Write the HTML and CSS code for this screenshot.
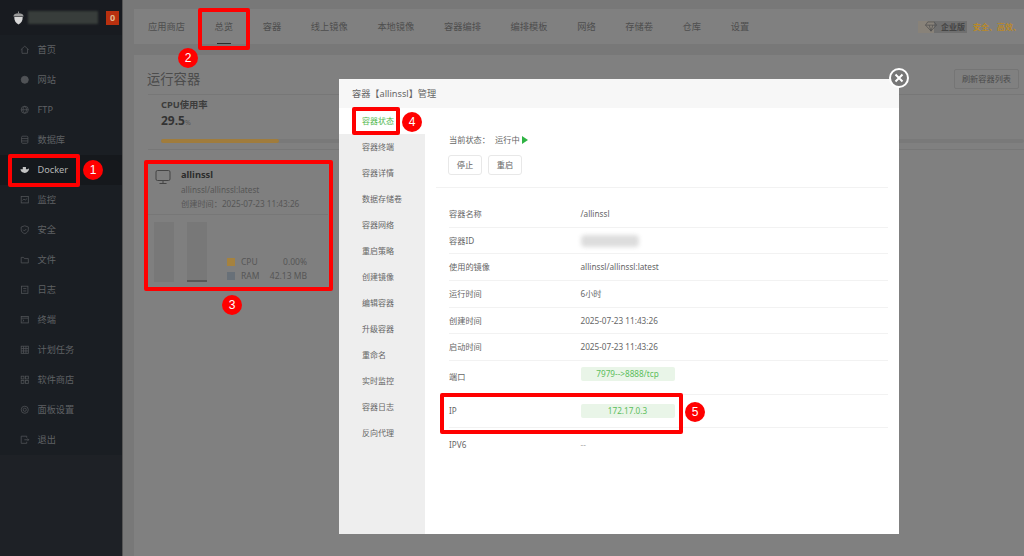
FILE: index.html
```html
<!DOCTYPE html>
<html lang="zh">
<head>
<meta charset="utf-8">
<title>Docker</title>
<link rel="stylesheet" href="styles.css">
</head>
<body>
<div class="app">
  <aside class="side">
    <div class="brand">
      <svg class="acorn" viewBox="0 0 14 14"><path d="M1.500 5.500C1.500 3 4 2 7 2s5.500 1 5.500 3.500z" fill="#9a9a9a"/><path d="M6.500 0h1v2h-1z" fill="#9a9a9a"/><path d="M2.500 6h9c.3 4-1.800 6.700-4.500 8C4.300 12.700 2.200 10 2.500 6z" fill="#d8d8d8"/></svg>
      <span class="brand-name"></span>
      <span class="brand-badge">0</span>
    </div>
    <nav class="menu">
      <a class="item"><svg class="ico" viewBox="0 0 12 12"><path d="M1 6l5-4.500L11 6M2.500 5v5.500h7V5"/></svg>首页</a>
      <a class="item"><svg class="ico" viewBox="0 0 12 12"><circle class="solid-dim" cx="6" cy="6" r="4.500"/><path d="M1.500 6h9M6 1.500v9"/></svg>网站</a>
      <a class="item"><svg class="ico" viewBox="0 0 12 12"><circle cx="6" cy="6" r="4.500"/><path d="M1.500 6h9M6 1.500c-3 3-3 6 0 9M6 1.500c3 3 3 6 0 9"/></svg>FTP</a>
      <a class="item"><svg class="ico" viewBox="0 0 12 12"><rect x="2" y="1.500" width="8" height="9" rx="1.500"/><path d="M2 4.500h8M2 7.500h8"/></svg>数据库</a>
      <a class="item active"><svg class="ico" viewBox="0 0 12 12"><path class="solid" d="M.5 5.500h9c.5-.8 1.200-1 2-1-.2 3-2.200 5.500-5.500 5.500C3 10 1 8.500.5 5.500zM3.500 2.500h4v3h-4z"/></svg>Docker</a>
      <a class="item"><svg class="ico" viewBox="0 0 12 12"><rect x="1.500" y="2" width="9" height="8"/><path d="M3 7l2-2 1.500 1.500L9 4.500"/></svg>监控</a>
      <a class="item"><svg class="ico" viewBox="0 0 12 12"><path d="M6 1l4.500 1.500V6c0 2.500-2 4-4.500 5C3.500 10 1.500 8.500 1.500 6V2.500zM4 6l1.500 1.500L8 5"/></svg>安全</a>
      <a class="item"><svg class="ico" viewBox="0 0 12 12"><path d="M1.500 3h3l1 1.500h5v5.500h-9z"/></svg>文件</a>
      <a class="item"><svg class="ico" viewBox="0 0 12 12"><rect x="2" y="1.500" width="8" height="9"/><path d="M4 4.500h4M4 7.500h4"/></svg>日志</a>
      <a class="item"><svg class="ico" viewBox="0 0 12 12"><rect x="1.500" y="2" width="9" height="8"/><path d="M1.500 4h9M3.500 6l1.500 1-1.500 1"/></svg>终端</a>
      <a class="item"><svg class="ico" viewBox="0 0 12 12"><rect x="1.500" y="1.500" width="9" height="9"/><path d="M1.500 4.500h9M1.500 7.500h9M4.500 1.500v9M7.500 1.500v9"/></svg>计划任务</a>
      <a class="item"><svg class="ico" viewBox="0 0 12 12"><rect x="1.500" y="1.500" width="3.500" height="3.500"/><rect x="7" y="1.500" width="3.500" height="3.500"/><rect x="1.500" y="7" width="3.500" height="3.500"/><rect x="7" y="7" width="3.500" height="3.500"/></svg>软件商店</a>
      <a class="item"><svg class="ico" viewBox="0 0 12 12"><circle cx="6" cy="6" r="4.500"/><circle cx="6" cy="6" r="2"/></svg>面板设置</a>
      <a class="item"><svg class="ico" viewBox="0 0 12 12"><path d="M8.500 3.500V1.500h-7v9h7V8.500M5.500 6h5.500M9.500 4.500L11 6 9.500 7.500"/></svg>退出</a>
    </nav>
  </aside>

  <main class="main">
    <div class="tabs">
      <a class="tab">应用商店</a>
      <a class="tab current">总览</a>
      <a class="tab">容器</a>
      <a class="tab">线上镜像</a>
      <a class="tab">本地镜像</a>
      <a class="tab">容器编排</a>
      <a class="tab">编排模板</a>
      <a class="tab">网络</a>
      <a class="tab">存储卷</a>
      <a class="tab">仓库</a>
      <a class="tab">设置</a>
      <div class="promo">
        <span class="promo-tag"><svg class="gem" viewBox="0 0 14 12"><path d="M3.500 1h7L13 4.500 7 11 1 4.500zM1 4.500h12M5 4.500L7 11l2-6.500"/></svg><span class="promo-ed">企业版</span></span>
        <span class="promo-text">安全、高效、</span>
      </div>
    </div>
    <section class="panel">
      <div class="panel-head">
        <h2 class="panel-title">运行容器</h2>
        <button class="refresh">刷新容器列表</button>
      </div>
      <div class="usage">
        <div class="usage-label">CPU使用率</div>
        <div class="usage-val">29.5<small>%</small></div>
        <div class="track"><div class="fill"></div></div>
      </div>
      <div class="ccard">
        <div class="ccard-top">
          <svg class="monitor" viewBox="0 0 16 16"><rect x="1" y="1.500" width="14" height="10" rx="1.500"/><path d="M8 11.500v3M4.500 14.500h7"/></svg>
          <div>
            <div class="cname">allinssl</div>
            <div class="cmeta">allinssl/allinssl:latest</div>
            <div class="cmeta">创建时间：2025-07-23 11:43:26</div>
          </div>
        </div>
        <div class="ccard-bottom">
          <div class="bar"></div>
          <div class="bar"><div class="bar-level"></div></div>
          <div class="legend">
            <div class="legend-row"><i class="sq sq-cpu"></i><span>CPU</span><b>0.00%</b></div>
            <div class="legend-row"><i class="sq sq-ram"></i><span>RAM</span><b>42.13 MB</b></div>
          </div>
        </div>
      </div>
    </section>
  </main>
</div>

<div class="modal">
  <div class="modal-head">容器【allinssl】管理</div>
  <div class="modal-body">
    <ul class="mnav">
      <li class="on">容器状态</li>
      <li>容器终端</li>
      <li>容器详情</li>
      <li>数据存储卷</li>
      <li>容器网络</li>
      <li>重启策略</li>
      <li>创建镜像</li>
      <li>编辑容器</li>
      <li>升级容器</li>
      <li>重命名</li>
      <li>实时监控</li>
      <li>容器日志</li>
      <li>反向代理</li>
    </ul>
    <div class="mcontent">
      <div class="status">
        <div class="status-line"><span class="status-k">当前状态：</span><span>运行中</span><i class="play"></i></div>
        <div class="btns"><button class="btn">停止</button><button class="btn">重启</button></div>
      </div>
      <div class="rows">
        <div class="row"><span class="k">容器名称</span><span>/allinssl</span></div>
        <div class="row"><span class="k">容器ID</span><span class="smudge"></span></div>
        <div class="row"><span class="k">使用的镜像</span><span>allinssl/allinssl:latest</span></div>
        <div class="row"><span class="k">运行时间</span><span>6小时</span></div>
        <div class="row"><span class="k">创建时间</span><span>2025-07-23 11:43:26</span></div>
        <div class="row"><span class="k">启动时间</span><span>2025-07-23 11:43:26</span></div>
        <div class="row tall"><span class="k">端口</span><span class="tag tag-up">7979--&gt;8888/tcp</span></div>
        <div class="row tall"><span class="k">IP</span><span class="tag">172.17.0.3</span></div>
        <div class="row tall last"><span class="k">IPV6</span><span class="dash">--</span></div>
      </div>
    </div>
  </div>
  <button class="close" aria-label="关闭"><svg viewBox="0 0 12 12"><path d="M2.500 2.500l7 7M9.500 2.500l-7 7"/></svg></button>
</div>

<div class="mark m1"></div><span class="num n1">1</span>
<div class="mark m2"></div><span class="num n2">2</span>
<div class="mark m3"></div><span class="num n3">3</span>
<div class="mark m4"></div><span class="num n4">4</span>
<div class="mark m5"></div><span class="num n5">5</span>
</body>
</html>
```
FILE: styles.css
```css
* { box-sizing: border-box; }
html, body { margin: 0; padding: 0; }
body {
  position: relative;
  width: 1024px;
  height: 556px;
  overflow: hidden;
  font-family: "Noto Sans", "Noto Sans CJK SC", sans-serif;
  font-size: 8.200px;
  line-height: 12px;
  color: #666;
  background: #787878;
}
.app { display: flex; height: 556px; }

/* sidebar */
.side { width: 123px; flex: none; background: #1e2126; border-right: 1px solid #555; }
.brand { height: 35px; display: flex; align-items: center; padding: 0 3px 0 12px; background: #181b20; }
.acorn { width: 13px; height: 14px; flex: none; }
.brand-name { width: 70px; height: 13px; margin-left: 3px; background: #383d3b; filter: blur(.8px); }
.brand-badge { width: 13px; height: 14px; margin-left: 8px; background: #b8300f; color: #e0b890; font-size: 9px; font-weight: 700; line-height: 14px; text-align: center; }
.menu { background: #1a1e23; }
.item { display: flex; align-items: center; height: 30px; padding-left: 20px; gap: 8px; color: #5f6163; font-size: 9.200px; }
.ico { width: 9.500px; height: 9.500px; flex: none; fill: none; stroke: #505356; stroke-width: 1; }
.solid-dim { fill: #505356; }
.item.active { background: #15181c; color: #b4b4b4; }
.item.active .ico { stroke: none; }
.solid { fill: #c4c4c4; stroke: none; }

/* main */
.main { flex: 1; min-width: 0; padding: 9px 0 0 11px; display: flex; flex-direction: column; gap: 11px; }
.tabs { height: 35px; flex: none; display: flex; align-items: center; background: #808080; }
.tab { position: relative; display: flex; align-items: center; height: 35px; padding: 0 14.800px; color: #4e4e4e; font-size: 9.250px; }
.tab:first-child { margin-left: -0.800px; }
.tab.current::after { content: ""; position: absolute; left: 50%; bottom: 0; width: 14px; margin-left: -7px; height: 1.500px; background: #2c2c2c; }
.promo { margin-left: auto; display: flex; align-items: center; gap: 6px; white-space: nowrap; font-size: 8px; width: 106px; height: 13px; overflow: hidden; }
.promo-tag { display: flex; align-items: center; width: 49px; flex: none; background: linear-gradient(90deg, #888279 33%, #6f6f6f 33%); height: 12px; padding-left: 6px; }
.gem { width: 14px; height: 11px; flex: none; fill: none; stroke: #4f4f4f; stroke-width: .8; }
.promo-ed { margin-left: 3px; color: #444; font-weight: 700; }
.promo-text { color: #b8892a; font-weight: 700; }

.panel { flex: 1; background: #808080; padding: 14px 5px 0 13px; }
.panel-head { display: flex; align-items: center; justify-content: space-between; height: 20px; }
.panel-title { margin: 0; font-size: 13.300px; font-weight: 400; color: #4c4c4c; line-height: 20px; }
.refresh { width: 65px; height: 20px; padding: 0; background: #808080; border: 1px solid #757575; border-radius: 2px; color: #4c4c4c; font: inherit; }
.usage { height: 56px; margin: 5px -5px 0 1px; padding: 3px 0 0 13px; border-top: 1px solid #777; border-bottom: 1px solid #777; }
.usage-label { color: #3c3c3c; font-size: 9.300px; font-weight: 700; line-height: 14px; }
.usage-val { margin-top: 1px; color: #333; font-size: 12px; font-weight: 700; line-height: 16px; }
.usage-val small { font-size: 7px; font-weight: 400; color: #555; }
.track { height: 4px; margin-top: 8px; background: #797979; border-radius: 2px; }
.fill { width: 118px; height: 100%; background: #a07c3c; border-radius: 2px; }

.ccard { width: 180px; height: 122px; margin: 14px 0 0 1px; background: #7f7f7f; }
.ccard-top { display: flex; height: 51px; padding: 1.500px 0 0 7px; gap: 10px; border-bottom: 1px solid #777; }
.monitor { width: 16px; height: 16px; margin-top: 3.500px; fill: none; stroke: #444; stroke-width: 1; flex: none; }
.cname { color: #2c2c2c; font-size: 9.300px; font-weight: 700; line-height: 17px; }
.cmeta { color: #565656; font-size: 8.200px; line-height: 14px; white-space: nowrap; }
.ccard-bottom { display: flex; gap: 13px; padding: 7px 0 0 6px; }
.bar { position: relative; width: 20px; height: 60px; background: #787878; }
.bar-level { position: absolute; left: 0; right: 0; bottom: 0; height: 2px; background: #585858; }
.legend { align-self: flex-end; width: 80px; margin: 0 0 -1.500px 7px; }
.legend-row { display: flex; align-items: center; height: 14.500px; color: #565656; font-size: 8.500px; }
.legend-row b { margin-left: auto; font-weight: 400; }
.sq { width: 8px; height: 8px; margin-right: 6px; flex: none; }
.sq-cpu { background: #a5823f; }
.sq-ram { background: #687078; }

/* modal */
.modal { position: absolute; left: 339px; top: 79px; width: 560px; height: 455px; background: #fff; display: flex; flex-direction: column; }
.modal-head { height: 29px; flex: none; padding-left: 13px; background: #f7f7f7; color: #666; font-size: 9.200px; line-height: 30px; }
.modal-body { flex: 1; display: flex; min-height: 0; }
.mnav { width: 86px; flex: none; margin: 0; padding: 0; list-style: none; background: #eee; }
.mnav li { height: 26px; padding-left: 23px; color: #666; font-size: 8px; line-height: 26px; }
.mnav li.on { background: #fff; color: #53b94f; }
.mcontent { flex: 1; min-width: 0; padding: 0 11px; }
.status { height: 80px; padding: 26px 0 0 13px; border-bottom: 1px solid #f2f2f2; color: #666; }
.status-line { display: flex; align-items: center; height: 12px; }
.status-k { width: 46px; }
.play { width: 0; height: 0; margin-left: 2px; border-left: 6px solid #2fb344; border-top: 4px solid transparent; border-bottom: 4px solid transparent; }
.btns { display: flex; gap: 6px; margin: 9px 0 0 -1px; }
.btn { width: 34px; height: 20px; padding: 0; background: #fff; border: 1px solid #e8e8e8; border-radius: 3px; color: #666; font: inherit; }
.rows { padding: 13px 0 0 13px; }
.row { display: flex; align-items: center; height: 26.700px; border-bottom: 1px solid #f2f2f2; color: #666; }
.row.tall { height: 33.500px; }
.row.last { border-bottom: 0; }
.k { width: 131.500px; flex: none; }
.dash { color: #aaa; }
.smudge { width: 58px; height: 12px; background: #ddd; border-radius: 4px; filter: blur(2px); }
.tag { width: 94px; height: 14px; background: #e9f5e8; border-radius: 2px; color: #5cbe5c; font-size: 8.200px; line-height: 14px; text-align: center; }
.tag-up { align-self: flex-start; margin-top: 6px; }

.close { position: absolute; left: 550px; top: -11px; width: 20px; height: 20px; padding: 0; display: flex; align-items: center; justify-content: center; background: #777; border: 2px solid #fff; border-radius: 50%; }
.close svg { width: 12px; height: 12px; fill: none; stroke: #fff; stroke-width: 2; }

/* annotations */
.mark { position: absolute; border: 4px solid #f00; border-radius: 2px; }
.m1 { left: 8px; top: 154px; width: 72px; height: 33px; }
.m2 { left: 198px; top: 8px; width: 52px; height: 42px; }
.m3 { left: 144px; top: 159.500px; width: 189px; height: 131.500px; }
.m4 { left: 352px; top: 106.500px; width: 48px; height: 28.500px; }
.m5 { left: 440px; top: 393px; width: 243px; height: 41px; }
.num { position: absolute; width: 20px; height: 20px; border-radius: 50%; background: #f00; color: #fff; font-family: "Liberation Sans", sans-serif; font-size: 12px; line-height: 20px; text-align: center; }
.n1 { left: 83px; top: 160px; }
.n2 { left: 178px; top: 48px; }
.n3 { left: 222px; top: 295px; }
.n4 { left: 402px; top: 112px; }
.n5 { left: 685px; top: 402px; }
```
